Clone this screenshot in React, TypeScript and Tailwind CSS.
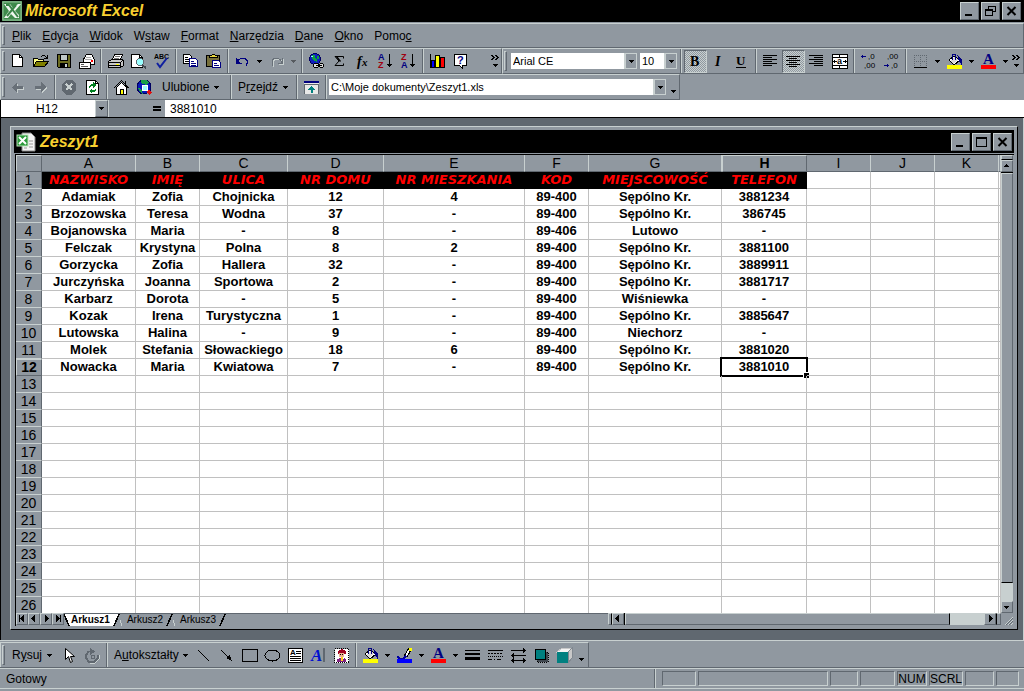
import { useState, type ReactNode } from 'react';
import clsx from 'clsx';

const MENU: [string, string, string][] = [
  ['', 'P', 'lik'],
  ['', 'E', 'dycja'],
  ['', 'W', 'idok'],
  ['W', 's', 'taw'],
  ['', 'F', 'ormat'],
  ['', 'N', 'arzędzia'],
  ['', 'D', 'ane'],
  ['', 'O', 'kno'],
  ['Pomo', 'c', '']
];

const COLUMNS = [
  { name: 'A', width: 'w-[94px]' },
  { name: 'B', width: 'w-[64px]' },
  { name: 'C', width: 'w-[88px]' },
  { name: 'D', width: 'w-[96px]' },
  { name: 'E', width: 'w-[141px]' },
  { name: 'F', width: 'w-[64px]' },
  { name: 'G', width: 'w-[133px]' },
  { name: 'H', width: 'w-[85px]' },
  { name: 'I', width: 'w-[64px]' },
  { name: 'J', width: 'w-[64px]' },
  { name: 'K', width: 'w-[64px]' },
  { name: '', width: 'w-auto' }
];

const DATA = [
  ['NAZWISKO', 'IMIĘ', 'ULICA', 'NR DOMU', 'NR MIESZKANIA', 'KOD', 'MIEJSCOWOŚĆ', 'TELEFON'],
  ['Adamiak', 'Zofia', 'Chojnicka', '12', '4', '89-400', 'Sępólno Kr.', '3881234'],
  ['Brzozowska', 'Teresa', 'Wodna', '37', '-', '89-400', 'Sępólno Kr.', '386745'],
  ['Bojanowska', 'Maria', '-', '8', '-', '89-406', 'Lutowo', '-'],
  ['Felczak', 'Krystyna', 'Polna', '8', '2', '89-400', 'Sępólno Kr.', '3881100'],
  ['Gorzycka', 'Zofia', 'Hallera', '32', '-', '89-400', 'Sępólno Kr.', '3889911'],
  ['Jurczyńska', 'Joanna', 'Sportowa', '2', '-', '89-400', 'Sępólno Kr.', '3881717'],
  ['Karbarz', 'Dorota', '-', '5', '-', '89-400', 'Wiśniewka', '-'],
  ['Kozak', 'Irena', 'Turystyczna', '1', '-', '89-400', 'Sępólno Kr.', '3885647'],
  ['Lutowska', 'Halina', '-', '9', '-', '89-400', 'Niechorz', '-'],
  ['Molek', 'Stefania', 'Słowackiego', '18', '6', '89-400', 'Sępólno Kr.', '3881020'],
  ['Nowacka', 'Maria', 'Kwiatowa', '7', '-', '89-400', 'Sępólno Kr.', '3881010']
];

const ROW_COUNT = 26;

const RAISED =
  'border border-t-[#c8d0d0] border-l-[#c8d0d0] border-r-[#606870] border-b-[#606870]';
const SUNKEN =
  'border border-t-[#606870] border-l-[#606870] border-r-[#c8d0d0] border-b-[#c8d0d0]';

function Icon({ children }: { children: ReactNode }) {
  return (
    <svg
      viewBox="0 0 17 17"
      className="block size-[17px] overflow-visible"
      fill="none"
      stroke="#000"
      shapeRendering="crispEdges"
      aria-hidden="true"
    >
      {children}
    </svg>
  );
}

function Glyph({
  x,
  y,
  size,
  color = '#000',
  serif = false,
  italic = false,
  bold = true,
  children
}: {
  x: number;
  y: number;
  size: number;
  color?: string;
  serif?: boolean;
  italic?: boolean;
  bold?: boolean;
  children: string;
}) {
  return (
    <text
      x={x}
      y={y}
      fontSize={size}
      fill={color}
      stroke="none"
      fontWeight={bold ? 700 : 400}
      fontStyle={italic ? 'italic' : 'normal'}
      fontFamily={serif ? 'Liberation Serif, serif' : 'Liberation Sans, sans-serif'}
    >
      {children}
    </text>
  );
}

function Down() {
  return (
    <svg viewBox="0 0 5 3" className="block h-[3px] w-[5px]" shapeRendering="crispEdges" aria-hidden="true">
      <path d="M0 0h5v1h-1v1h-1v1h-1v-1h-1v-1h-1z" fill="#000" />
    </svg>
  );
}

function Tool({
  label,
  pressed = false,
  children
}: {
  label: string;
  pressed?: boolean;
  children: ReactNode;
}) {
  return (
    <button
      type="button"
      aria-label={label}
      aria-pressed={pressed}
      className={clsx(
        'flex size-[23px] shrink-0 items-center justify-center',
        pressed &&
          'border border-t-[#606870] border-l-[#606870] border-r-[#c8d0d0] border-b-[#c8d0d0] bg-[repeating-conic-gradient(#c8d0d0_0_25%,#9098a0_0_50%)] bg-[length:2px_2px]'
      )}
    >
      {children}
    </button>
  );
}

function Drop({ label, dim = false }: { label: string; dim?: boolean }) {
  return (
    <button
      type="button"
      aria-label={label}
      className={clsx('flex h-[23px] w-[11px] shrink-0 items-center justify-center', dim && 'opacity-40')}
    >
      <Down />
    </button>
  );
}

function More({ label }: { label: string }) {
  return (
    <button type="button" aria-label={label} className="flex h-[23px] w-[11px] shrink-0 items-center justify-center">
      <svg viewBox="0 0 9 17" className="block h-[17px] w-[9px]" shapeRendering="crispEdges" fill="none" stroke="#000" aria-hidden="true">
        <path d="M0 2h2v1h1v1h1v1h-1v1h-1v1h-2v-1h1v-1h1v-1h-1v-1h-1zM4 2h2v1h1v1h1v1h-1v1h-1v1h-2v-1h1v-1h1v-1h-1v-1h-1z" fill="#000" stroke="none" />
        <path d="M2 11h5v1h-1v1h-1v1h-1v-1h-1v-1h-1z" fill="#000" stroke="none" />
      </svg>
    </button>
  );
}

function Sep() {
  return (
    <span className="flex w-[6px] shrink-0 justify-center self-stretch">
      <span className="w-[2px] border-r border-l border-r-[#c8d0d0] border-l-[#606870]" />
    </span>
  );
}

function Grip() {
  return <span className={clsx('mx-px my-[2px] w-[3px] shrink-0 self-stretch', RAISED)} />;
}

function Combo({
  label,
  value,
  className
}: {
  label: string;
  value: string;
  className: string;
}) {
  return (
    <div className={clsx('relative flex h-4 bg-white', className)}>
      <select
        aria-label={label}
        defaultValue={value}
        className="h-4 w-full appearance-none bg-white pl-[2px] text-[11px] leading-4 outline-none"
      >
        <option>{value}</option>
      </select>
      <span className="pointer-events-none absolute inset-y-0 right-0 flex w-[13px] items-center justify-center border border-l-2 border-[#c8d0d0] bg-[#9098a0]">
        <Down />
      </span>
    </div>
  );
}

function WinButton({ label, children }: { label: string; children: ReactNode }) {
  return (
    <button
      type="button"
      aria-label={label}
      className={clsx('flex h-[18px] w-[19px] items-center justify-center bg-[#9098a0]', RAISED)}
    >
      <svg viewBox="0 0 13 12" className="block h-3 w-[13px]" fill="none" stroke="#000" shapeRendering="crispEdges" aria-hidden="true">
        {children}
      </svg>
    </button>
  );
}

function WinButtons({ middle }: { middle: 'restore' | 'maximize' }) {
  return (
    <div className="flex gap-[2px]">
      <WinButton label="Minimalizuj">
        <path d="M2 10h7" strokeWidth="2" />
      </WinButton>
      <WinButton label={middle === 'restore' ? 'Przywróć' : 'Maksymalizuj'}>
        {middle === 'restore' ? (
          <>
            <path d="M4.500 4v-3h7v5h-3M4 1.500h8M1.500 4.500h7v6h-7zM1 5.500h8" />
          </>
        ) : (
          <path d="M1.500 1.500h10v9h-10zM1 2.500h11" />
        )}
      </WinButton>
      <WinButton label="Zamknij">
        <path d="M2.500 2l8 8M10.500 2l-8 8" strokeWidth="2" shapeRendering="auto" />
      </WinButton>
    </div>
  );
}

function Bucket() {
  return (
    <Icon>
      <path d="M3 7l5-4 6 4-6 5z" fill="#fff" />
      <path d="M4 8l5-4 3 2-4 5z" fill="#d8d8d8" stroke="none" />
      <path d="M6.500 7v-5l1-1h1l1 1v5" stroke="#000080" />
      <path d="M12 3l3 3v4l-2-3z" fill="#000080" stroke="#000080" />
      <path d="M1 12h15v4h-15z" fill="#ff0" stroke="none" />
    </Icon>
  );
}

function FontColor() {
  return (
    <Icon>
      <Glyph x={3} y={11} size={15} color="#000080" serif>
        A
      </Glyph>
      <path d="M1 12h15v4h-15z" fill="#f00" stroke="none" />
    </Icon>
  );
}

function TitleBar() {
  return (
    <header className="flex h-[22px] shrink-0 items-center bg-black pr-[3px] pl-[2px] text-[#f8d030]">
      <svg viewBox="0 0 20 20" className="mr-[3px] size-5" aria-hidden="true">
        <rect width="20" height="20" fill="#5a9c66" />
        <path d="M1 1h18v18h-18z" fill="#3f8a4c" stroke="#8fbf96" />
        <path d="M2 3h6l3 4 5-4h3l-6 7 4 4v3h-4l-4-4-3 4h-4l5-7z" fill="#f0f6f0" />
        <path d="M4 4h3l9 12M14 4l-9 11" fill="none" stroke="#3a8448" strokeWidth="2" />
      </svg>
      <h1 className="flex-1 text-base leading-5 font-bold italic">Microsoft Excel</h1>
      <WinButtons middle="restore" />
    </header>
  );
}

function MenuBar() {
  return (
    <nav className={clsx('mt-px flex h-[25px] shrink-0 items-center gap-px', RAISED)}>
      <Grip />
      {MENU.map(([before, key, after]) => (
        <button key={before + key + after} type="button" className="px-[5px] leading-5">
          {before}
          <u>{key}</u>
          {after}
        </button>
      ))}
    </nav>
  );
}

function StandardToolbar() {
  return (
    <div className={clsx('flex w-[502px] items-center', RAISED)}>
      <Grip />
      <Tool label="Nowy">
        <Icon>
          <path d="M3.500 1.500h7l3 3v9h-10z" fill="#fff" />
          <path d="M10.500 1.500v3h3" />
        </Icon>
      </Tool>
      <Tool label="Otwórz">
        <Icon>
          <path d="M1.500 13.500v-8h4l1 1h5v7z" fill="#ff8" />
          <path d="M1.500 13.500l3-5h12l-4 5z" fill="#808000" />
          <path d="M9 3.500h1M10 2.500h3M13 3.500h1M14 4.500h1M12 5.500h4M15.500 2v3" />
        </Icon>
      </Tool>
      <Tool label="Zapisz">
        <Icon>
          <path d="M2.500 1.500h13v13h-12l-1-1z" fill="#6b6b20" />
          <path d="M5.500 1.500h7v6h-7z" fill="#c0c8c8" />
          <path d="M5 10h8v4h-8z" fill="#000" stroke="none" />
          <path d="M10 11h2v3h-2z" fill="#c8d0d0" stroke="none" />
        </Icon>
      </Tool>
      <Tool label="Poczta">
        <Icon>
          <path d="M5.500 6.500l3-5h5l3 5v5h-11z" fill="#fff" />
          <path d="M8 4.500h5M7 6.500h7" stroke="#aaa" />
          <path d="M13 7h2v2h-2z" fill="#f00" stroke="none" />
          <path d="M1.500 9.500h11v6h-11z" fill="#fff" />
          <path d="M3 11.500h3M3 13.500h7" stroke="#555" />
        </Icon>
      </Tool>
      <Sep />
      <Tool label="Drukuj">
        <Icon>
          <path d="M5.500 6.500l2-5h8l-2 5z" fill="#fff" />
          <path d="M8 3.500h5M7 5.500h5" stroke="#777" />
          <path d="M1.500 8.500l3-2h11l1 2v4l-3 2h-12z" fill="#c8c8c8" />
          <path d="M1 9.500h12v5M13 9.500l3-2M2 12.500h11" />
          <path d="M9 11h3v1h-3z" fill="#ff0" stroke="none" />
        </Icon>
      </Tool>
      <Tool label="Podgląd wydruku">
        <Icon>
          <path d="M1.500 1.500h8l3 3v10h-11z" fill="#fff" />
          <path d="M9.500 1.500v3h3" />
          <circle cx="10" cy="9" r="3.500" fill="#9ff" stroke="#606870" />
          <path d="M12 12l4 3" strokeWidth="2" stroke="#404850" />
        </Icon>
      </Tool>
      <Tool label="Pisownia">
        <Icon>
          <Glyph x={1} y={6} size={7}>
            ABC
          </Glyph>
          <path d="M4 10l3 4 7-9" stroke="#1020a0" strokeWidth="2" shapeRendering="auto" />
        </Icon>
      </Tool>
      <Sep />
      <Tool label="Kopiuj">
        <Icon>
          <path d="M1.500 1.500h6l2 2v7h-8z" fill="#fff" />
          <path d="M3 4.500h3M3 6.500h5M3 8.500h5" />
          <path d="M7.500 5.500h6l2 2v6h-8z" fill="#fff" stroke="#000080" />
          <path d="M9 8.500h3M9 10.500h5M9 12.500h5" stroke="#000080" />
        </Icon>
      </Tool>
      <Tool label="Wklej">
        <Icon>
          <path d="M1.500 2.500h13v11h-13z" fill="#77703c" />
          <path d="M4.500 4.500v-2h2l1-1h2l1 1h2v2z" fill="#e8d840" />
          <path d="M7.500 7.500h6l2 2v5h-8z" fill="#fff" stroke="#000080" />
          <path d="M9 10.500h3M9 12.500h5" stroke="#000080" />
        </Icon>
      </Tool>
      <Sep />
      <Tool label="Cofnij">
        <Icon>
          <path d="M2.500 5v5h5M3 9.500l2-3 2-1h4l2 2v3l-1 2" stroke="#000080" />
          <path d="M2 6h1l2 2 1 2h-4z" fill="#000080" stroke="none" />
        </Icon>
      </Tool>
      <Drop label="Lista cofania" />
      <Tool label="Ponów">
        <Icon>
          <path d="M15.500 6v5h-5M15 10.500l-2-3-2-1h-4l-2 2v3l1 2" stroke="#c8d0d0" />
          <path d="M14.500 5v5h-5M14 9.500l-2-3-2-1h-4l-2 2v3l1 2" stroke="#687078" />
        </Icon>
      </Tool>
      <Drop label="Lista ponawiania" dim />
      <Sep />
      <Tool label="Wstaw hiperłącze">
        <Icon>
          <circle cx="7" cy="6" r="5.500" fill="#1020c0" stroke="#000060" />
          <path d="M4 2h3v3l2 1v3l-3-1-2-3zM9 3h2v3h-2z" fill="#10a040" stroke="none" />
          <path d="M3 3h2v1h-2z" fill="#8ff" stroke="none" />
          <path d="M5.500 11.500l1-1h3l1 1v2l-1 1h-3l-1-1zM11.500 11.500l1-1h2l1 1v2l-1 1h-2l-1-1z" fill="#ddd" />
          <path d="M8 12.500h6" />
        </Icon>
      </Tool>
      <Tool label="Autosumowanie">
        <Icon>
          <path d="M12.500 5.500v-2h-8.500l4 4.500-4 4.500h8.500v-2" shapeRendering="auto" />
          <path d="M4 3h2l4 5-1 1z" fill="#000" stroke="none" shapeRendering="auto" />
        </Icon>
      </Tool>
      <Tool label="Wklej funkcję">
        <Icon>
          <Glyph x={3} y={13} size={14} serif italic>
            f
          </Glyph>
          <Glyph x={8} y={13} size={11} serif italic>
            x
          </Glyph>
        </Icon>
      </Tool>
      <Tool label="Sortuj rosnąco">
        <Icon>
          <Glyph x={1} y={7} size={9} color="#000080">
            A
          </Glyph>
          <Glyph x={1} y={15} size={9} color="#a00010">
            Z
          </Glyph>
          <path d="M12.500 1v13M10 11.500h5M11 12.500h3" />
        </Icon>
      </Tool>
      <Tool label="Sortuj malejąco">
        <Icon>
          <Glyph x={1} y={7} size={9} color="#a00010">
            Z
          </Glyph>
          <Glyph x={1} y={15} size={9} color="#000080">
            A
          </Glyph>
          <path d="M12.500 1v13M10 11.500h5M11 12.500h3" />
        </Icon>
      </Tool>
      <Sep />
      <Tool label="Kreator wykresów">
        <Icon>
          <path d="M1.500 1v13.500h14" />
          <path d="M2.500 7.500h3v7h-3z" fill="#00f" />
          <path d="M6.500 2.500h4v12h-4z" fill="#ff0" />
          <path d="M11.500 4.500h4v10h-4z" fill="#f00" />
        </Icon>
      </Tool>
      <Tool label="Pomoc">
        <Icon>
          <path d="M2.500 1.500h12v11h-4v3l-3-3h-5z" fill="#fff" />
          <Glyph x={5} y={11} size={11} color="#000080">
            ?
          </Glyph>
        </Icon>
      </Tool>
      <span className="flex-1" />
      <More label="Więcej przycisków" />
    </div>
  );
}

function FormatToolbar() {
  return (
    <div className={clsx('flex flex-1 items-center', RAISED)}>
      <Grip />
      <Combo label="Czcionka" value="Arial CE" className="ml-[3px] w-[126px]" />
      <Combo label="Rozmiar czcionki" value="10" className="ml-[3px] w-[37px]" />
      <span className="w-px" />
      <Sep />
      <Tool label="Pogrubienie" pressed>
        <Icon>
          <Glyph x={3} y={13} size={14} serif>
            B
          </Glyph>
        </Icon>
      </Tool>
      <Tool label="Kursywa">
        <Icon>
          <Glyph x={5} y={13} size={14} serif italic>
            I
          </Glyph>
        </Icon>
      </Tool>
      <Tool label="Podkreślenie">
        <Icon>
          <Glyph x={3} y={12} size={13} serif>
            U
          </Glyph>
          <path d="M3 14.500h10" />
        </Icon>
      </Tool>
      <Sep />
      <Tool label="Wyrównaj do lewej">
        <Icon>
          <path d="M1 2.500h14M1 4.500h9M1 6.500h14M1 8.500h9M1 10.500h14M1 12.500h9" />
        </Icon>
      </Tool>
      <Tool label="Wyśrodkuj" pressed>
        <Icon>
          <path d="M1 3.500h14M4 5.500h8M1 7.500h14M4 9.500h8M1 11.500h14M4 13.500h8" />
        </Icon>
      </Tool>
      <Tool label="Wyrównaj do prawej">
        <Icon>
          <path d="M1 2.500h14M6 4.500h9M1 6.500h14M6 8.500h9M1 10.500h14M6 12.500h9" />
        </Icon>
      </Tool>
      <Tool label="Scal i wyśrodkuj">
        <Icon>
          <path d="M1.500 1.500h15v14h-15z" fill="#fff" />
          <path d="M1 4.500h16M1 12.500h16M8.500 1v3M8.500 13v3M2 8.500h4M12 8.500h4M3.500 7v3M14.500 7v3" />
          <Glyph x={6} y={11} size={9}>
            a
          </Glyph>
        </Icon>
      </Tool>
      <Sep />
      <Tool label="Zwiększ dziesiętne">
        <Icon>
          <path d="M1 3.500h5M2.500 2v3" stroke="#000080" />
          <Glyph x={8} y={6} size={8} bold={false}>
            ,0
          </Glyph>
          <Glyph x={4} y={15} size={8} bold={false}>
            ,00
          </Glyph>
        </Icon>
      </Tool>
      <Tool label="Zmniejsz dziesiętne">
        <Icon>
          <Glyph x={4} y={6} size={8} bold={false}>
            ,00
          </Glyph>
          <path d="M1 12.500h5M4.500 11v3" stroke="#000080" />
          <Glyph x={8} y={15} size={8} bold={false}>
            ,0
          </Glyph>
        </Icon>
      </Tool>
      <Sep />
      <Tool label="Obramowanie">
        <Icon>
          <path d="M2.500 2v12M8.500 2v12M14.500 2v12M2 2.500h13M2 8.500h13" stroke="#606870" strokeDasharray="1 1" />
          <path d="M2 14.500h13" />
        </Icon>
      </Tool>
      <Drop label="Rodzaj obramowania" />
      <Tool label="Kolor wypełnienia">
        <Bucket />
      </Tool>
      <Drop label="Lista kolorów wypełnienia" />
      <Tool label="Kolor czcionki">
        <FontColor />
      </Tool>
      <Drop label="Lista kolorów czcionki" />
      <More label="Więcej przycisków formatowania" />
    </div>
  );
}

function WebToolbar() {
  return (
    <div className={clsx('flex h-[26px] w-[680px] shrink-0 items-center', RAISED)}>
      <Grip />
      <Tool label="Wstecz">
        <Icon>
          <path d="M4 9l5-5v4h6v3h-6v4z" fill="#c8d0d0" stroke="none" />
          <path d="M3 8l5-5v4h6v3h-6v4z" fill="#687078" stroke="none" />
        </Icon>
      </Tool>
      <Tool label="Dalej">
        <Icon>
          <path d="M15 9l-5-5v4h-6v3h6v4z" fill="#c8d0d0" stroke="none" />
          <path d="M14 8l-5-5v4h-6v3h6v4z" fill="#687078" stroke="none" />
        </Icon>
      </Tool>
      <Sep />
      <Tool label="Zatrzymaj">
        <Icon>
          <path d="M5 1h6l4 4v6l-4 5h-6l-4-5v-6z" fill="#606870" stroke="none" />
          <path d="M5 5l6 6M11 5l-6 6" stroke="#c8d0d0" strokeWidth="2" />
        </Icon>
      </Tool>
      <Tool label="Odśwież">
        <Icon>
          <path d="M2.500 1.500h9l3 3v11h-12z" fill="#fff" />
          <path d="M11.500 1.500v3h3" />
          <path d="M5 9v-2l2-2h2v-2l3 3-3 3v-2h-2zM12 9v2l-2 2h-2v2l-3-3 3-3v2h2z" fill="#008020" stroke="none" />
        </Icon>
      </Tool>
      <Sep />
      <Tool label="Strona startowa">
        <Icon>
          <path d="M3.500 15.500v-7l5-5 5 5v7z" fill="#fff" />
          <path d="M1 9l7.500-7.500 7 7.500M12.500 2v4" strokeWidth="1" />
          <path d="M7.500 10.500h3v5h-3z" fill="#ff0" />
        </Icon>
      </Tool>
      <Tool label="Przeszukaj sieć">
        <Icon>
          <circle cx="8" cy="8" r="7" fill="#0818b8" stroke="#000060" />
          <path d="M5 1h6l2 3-3 2-5-2zM2 9l3 1 2 5-3-2z" fill="#18a048" stroke="none" />
          <circle cx="9" cy="9" r="3" fill="#a0ffff" stroke="#fff" />
          <path d="M12 12l3 3" stroke="#e01010" strokeWidth="3" />
        </Icon>
      </Tool>
      <button type="button" className="flex w-[72px] shrink-0 items-center gap-[5px] pl-[6px] leading-5">
        Ulubione
        <Down />
      </button>
      <Sep />
      <button type="button" className="flex w-[60px] shrink-0 items-center gap-[5px] pl-[4px] leading-5">
        <span>
          P<u>r</u>zejdź
        </span>
        <Down />
      </button>
      <Sep />
      <Tool label="Pokaż tylko pasek narzędzi Sieć Web">
        <Icon>
          <path d="M1 2h15v13h-15z" fill="#e8e8e8" stroke="none" />
          <path d="M1 3h15" stroke="#000080" strokeWidth="2" />
          <path d="M1 5.500h15M1.500 5v10M15.500 5v10" stroke="#606870" />
          <path d="M8.500 7l4 4h-3v3h-2v-3h-3z" fill="#008080" stroke="none" />
        </Icon>
      </Tool>
      <Sep />
      <Combo label="Adres" value="C:\Moje dokumenty\Zeszyt1.xls" className="mr-[2px] min-w-0 flex-1" />
      <span className="mt-2">
        <Drop label="Opcje paska" />
      </span>
    </div>
  );
}

function FormulaBar() {
  return (
    <div className="flex h-[18px] shrink-0 items-stretch border-b border-b-black bg-[#9098a0]">
      <div className="relative flex w-[108px] border-l border-l-black bg-white">
        <select
          aria-label="Pole nazwy"
          defaultValue="H12"
          className="w-full appearance-none bg-white pl-[35px] leading-4 outline-none"
        >
          <option>H12</option>
        </select>
        <span
          className={clsx(
            'pointer-events-none absolute inset-y-0 right-0 flex w-[13px] items-center justify-center bg-[#9098a0]',
            RAISED
          )}
        >
          <Down />
        </span>
      </div>
      <button type="button" aria-label="Edytuj formułę" className="flex w-[57px] items-center justify-end border-l border-l-[#c8d0d0] pr-1">
        <svg viewBox="0 0 8 5" className="h-[5px] w-2" shapeRendering="crispEdges" aria-hidden="true">
          <path d="M0 0h8v2h-8zM0 3h8v2h-8z" />
        </svg>
      </button>
      <input
        aria-label="Pasek formuły"
        defaultValue="3881010"
        className="min-w-0 flex-1 bg-white pl-[5px] leading-4 outline-none"
      />
    </div>
  );
}

function Sheet() {
  return (
    <div className="min-w-0 flex-1 overflow-hidden bg-white">
      <table className="w-full table-fixed border-separate border-spacing-0 text-[13px] leading-4">
        <colgroup>
          <col className="w-[26px]" />
          {COLUMNS.map((column) => (
            <col key={column.name} className={column.width} />
          ))}
        </colgroup>
        <thead>
          <tr className="h-[17px]">
            <td className={clsx('h-[17px] bg-[#9098a0] p-0', RAISED)} />
            {COLUMNS.map((column) => (
              <th
                key={column.name}
                scope="col"
                className={clsx(
                  'h-[17px] bg-[#9098a0] p-0 text-sm leading-[15px]',
                  column.name === 'H'
                    ? 'border border-t-[#c8d0d0] border-l-[#c8d0d0] border-r-[#606870] border-b-[#606870] font-bold'
                    : 'border-r border-b border-r-[#c8d0d0] border-b-[#606870] font-normal'
                )}
              >
                {column.name}
              </th>
            ))}
          </tr>
        </thead>
        <tbody>
          {Array.from({ length: ROW_COUNT }, (_, row) => (
            <tr key={row} className="h-[17px]">
              <th
                scope="row"
                className={clsx(
                  'h-[17px] bg-[#9098a0] p-0 text-sm leading-[15px]',
                  row === 11
                    ? 'border border-t-[#c8d0d0] border-l-[#c8d0d0] border-r-[#606870] border-b-[#606870] font-bold'
                    : 'border-r border-b border-r-[#606870] border-b-[#c8d0d0] font-normal'
                )}
              >
                {row + 1}
              </th>
              {COLUMNS.map((column, index) => {
                const heading = row === 0 && index < 8;
                return (
                  <td
                    key={column.name}
                    className={clsx(
                      'relative h-[17px] p-0 text-center font-bold whitespace-nowrap',
                      heading
                        ? "border-r border-b border-black bg-black font-['DejaVu_Sans',sans-serif] text-[#ff0000] italic"
                        : 'border-r border-b border-[#c0c0c0]'
                    )}
                  >
                    {DATA[row]?.[index]}
                    {row === 11 && index === 7 && (
                      <span className="absolute -inset-[2px] border-2 border-black">
                        <span className="absolute -right-[3px] -bottom-[3px] size-[5px] bg-black outline outline-white" />
                      </span>
                    )}
                  </td>
                );
              })}
            </tr>
          ))}
        </tbody>
      </table>
    </div>
  );
}

function ScrollArrow({ label, d }: { label: string; d: string }) {
  return (
    <button
      type="button"
      aria-label={label}
      className="flex size-3 shrink-0 items-center justify-center border border-t-[#c8d0d0] border-l-[#c8d0d0] border-r-[#606870] border-b-[#606870] bg-[#9098a0]"
    >
      <svg viewBox="0 0 8 8" className="block size-2 shrink-0" shapeRendering="crispEdges" aria-hidden="true">
        <path d={d} fill="#000" />
      </svg>
    </button>
  );
}

const ARROW_UP = 'M3 2h1v1h1v1h1v1h-5v-1h1v-1h1z';
const ARROW_DOWN = 'M1 3h5v1h-1v1h-1v1h-1v-1h-1v-1h-1z';
const ARROW_LEFT = 'M5 0v7h-1v-1h-1v-1h-1v-1h-1v-1h1v-1h1v-1h1v-1z';
const ARROW_RIGHT = 'M3 0v7h1v-1h1v-1h1v-1h1v-1h-1v-1h-1v-1h-1v-1z';

function VerticalScroll() {
  return (
    <div className="flex w-3 shrink-0 flex-col bg-[#c8d0d0]">
      <span className={clsx('h-[5px] border-b-black! bg-[#9098a0]', RAISED)} />
      <ScrollArrow label="Przewiń w górę" d={ARROW_UP} />
      <span className="h-px bg-black" />
      <span className={clsx('grow-[410] border-b-black! bg-[#9098a0]', RAISED)} />
      <span className="grow-[18]" />
      <ScrollArrow label="Przewiń w dół" d={ARROW_DOWN} />
    </div>
  );
}

function SheetTab({
  name,
  active,
  first,
  onSelect
}: {
  name: string;
  active: boolean;
  first: boolean;
  onSelect: () => void;
}) {
  const fill = active ? '#fff' : '#9098a0';
  return (
    <button
      type="button"
      role="tab"
      aria-selected={active}
      onClick={onSelect}
      className={clsx('flex items-center text-[10px] leading-3', active && 'font-bold')}
    >
      <svg viewBox="0 0 7 12" className="h-3 w-[7px]" shapeRendering="crispEdges" aria-hidden="true">
        <path d="M0 0h7v12h-2z" fill={fill} />
        {first ? (
          <path d="M0 0l5 12" stroke="#000" fill="none" strokeWidth="1.500" />
        ) : (
          <path d="M0 6l2 6" stroke="#c8d0d0" fill="none" />
        )}
      </svg>
      <span className={clsx('h-3', active && 'bg-white')}>{name}</span>
      <svg viewBox="0 0 10 12" className="h-3 w-[10px]" shapeRendering="crispEdges" aria-hidden="true">
        <path d="M0 0h9l-5 12h-4z" fill={fill} />
        <path d="M9 0l-5 12" stroke="#000" fill="none" strokeWidth="1.500" />
      </svg>
    </button>
  );
}

function SheetFooter() {
  const [tab, setTab] = useState('Arkusz1');

  return (
    <div className="flex h-[13px] shrink-0 items-start">
      <div className="flex min-w-0 flex-1">
        <ScrollArrow label="Pierwszy arkusz" d="M1 0h1v7h-1zM6 0v7h-1v-1h-1v-1h-1v-1h-1v-1h1v-1h1v-1h1v-1z" />
        <ScrollArrow label="Poprzedni arkusz" d={ARROW_LEFT} />
        <ScrollArrow label="Następny arkusz" d={ARROW_RIGHT} />
        <ScrollArrow label="Ostatni arkusz" d="M6 0h1v7h-1zM2 0v7h1v-1h1v-1h1v-1h1v-1h-1v-1h-1v-1h-1v-1z" />
        <div role="tablist" className="flex flex-1 border-t border-t-[#606870]">
          {['Arkusz1', 'Arkusz2', 'Arkusz3'].map((name, index) => (
            <SheetTab
              key={name}
              name={name}
              active={tab === name}
              first={index === 0}
              onSelect={() => setTab(name)}
            />
          ))}
        </div>
      </div>
      <div className="flex h-3 w-[393px] shrink-0 bg-[#c8d0d0]">
        <span className={clsx('w-1 border-r-black! bg-[#9098a0]', RAISED)} />
        <ScrollArrow label="Przewiń w lewo" d={ARROW_LEFT} />
        <span className="w-px bg-black" />
        <span className={clsx('grow-[325] border-r-black! bg-[#9098a0]', RAISED)} />
        <span className="grow-[34]" />
        <ScrollArrow label="Przewiń w prawo" d={ARROW_RIGHT} />
        <span className={clsx('w-[5px] border-l-black! bg-[#9098a0]', RAISED)} />
      </div>
      <svg viewBox="0 0 12 12" className="size-3 shrink-0" aria-hidden="true">
        <path d="M4 12l8-8M7 12l5-5M10 12l2-2" stroke="#c8d0d0" />
        <path d="M5 12l7-7M8 12l4-4" stroke="#606870" />
      </svg>
    </div>
  );
}

function Workbook() {
  return (
    <section className="flex min-h-0 flex-1 flex-col border border-t-[#c8d0d0] border-l-[#c8d0d0] border-r-black border-b-black bg-[#9098a0] p-[3px]">
      <div className="flex h-[23px] shrink-0 items-center bg-black pr-[2px] text-[#f8d030]">
        <svg viewBox="0 0 20 20" className="mr-1 ml-[2px] size-5" aria-hidden="true">
          <path d="M6 1h9l4 4v14h-13z" fill="#f4f4f4" stroke="#888" />
          <path d="M13 9h4M13 12h4M13 15h4M8 16h3" stroke="#999" />
          <rect x="1" y="3" width="11" height="11" fill="#2a9a3a" stroke="#b8e0b8" />
          <path d="M3 5l7 7M10 5l-7 7" stroke="#fff" strokeWidth="2" />
        </svg>
        <h2 className="flex-1 text-base leading-5 font-bold italic">Zeszyt1</h2>
        <WinButtons middle="maximize" />
      </div>
      <div className="mt-px ml-px flex min-h-0 flex-1 flex-col border-t border-l border-black pr-px">
        <div className="flex min-h-0 flex-1">
          <Sheet />
          <VerticalScroll />
        </div>
        <SheetFooter />
      </div>
    </section>
  );
}

function DrawingToolbar() {
  return (
    <div className="shrink-0 border-y border-t-[#c8d0d0] border-b-[#606870]">
      <div className={clsx('mt-px flex h-[25px] w-[589px] items-center border-b-0!', RAISED)}>
        <Grip />
        <button type="button" className="flex w-[52px] shrink-0 items-center gap-[5px] pl-[6px] leading-5">
          <span>
            R<u>y</u>suj
          </span>
          <Down />
        </button>
        <Tool label="Zaznacz obiekty">
          <Icon>
            <path d="M4.500 1.500v11l3-3 2 6 2-1-2-5h4z" fill="#fff" stroke="#000" shapeRendering="auto" />
          </Icon>
        </Tool>
        <Tool label="Obrót swobodny">
          <Icon>
            <path d="M15 8v4l-4 4h-5l-3-3" stroke="#c8d0d0" />
            <path d="M5 4l-3 4v3l3 4h5l4-4v-3" stroke="#606870" strokeWidth="2" />
            <path d="M6 1v7l5-3.500z" stroke="none" fill="#606870" />
            <path d="M7 8h3v3h-3z" stroke="#606870" />
          </Icon>
        </Tool>
        <Sep />
        <button type="button" className="flex w-[82px] shrink-0 items-center gap-1 pl-[4px] leading-5">
          <span>
            A<u>u</u>tokształty
          </span>
          <Down />
        </button>
        <Tool label="Linia">
          <Icon>
            <path d="M3 3l11 11" />
          </Icon>
        </Tool>
        <Tool label="Strzałka">
          <Icon>
            <path d="M3 3l9 9" />
            <path d="M14 14l-6-3 4-3z" fill="#000" stroke="none" />
          </Icon>
        </Tool>
        <Tool label="Prostokąt">
          <Icon>
            <path d="M1.500 2.500h15v12h-15z" />
          </Icon>
        </Tool>
        <Tool label="Elipsa">
          <Icon>
            <ellipse cx="8.500" cy="8.500" rx="7.500" ry="5.500" />
          </Icon>
        </Tool>
        <Tool label="Pole tekstowe">
          <Icon>
            <path d="M1.500 1.500h14v14h-14z" fill="#fff" />
            <Glyph x={3} y={8} size={8}>
              A
            </Glyph>
            <path d="M9 4.500h5M9 6.500h5M3 9.500h11M3 11.500h11M3 13.500h11" />
          </Icon>
        </Tool>
        <Tool label="Wstaw WordArt">
          <Icon>
            <path d="M13 1h2v14h-2z" fill="#606870" stroke="none" />
            <Glyph x={1} y={14} size={17} color="#0010d0" serif italic>
              A
            </Glyph>
          </Icon>
        </Tool>
        <Tool label="Wstaw clipart">
          <Icon>
            <path d="M1.500 1.500h14v14h-14z" fill="#fff" strokeDasharray="1 1" />
            <path d="M5 4l4-2 4 2v3h-8z" fill="#a00020" stroke="none" />
            <path d="M6 6h5v4h-5z" fill="#f0b090" stroke="none" />
            <path d="M7 7.500h1M9 7.500h1" />
            <path d="M4 15v-3l3-1 2 1 3-1 1 2v2z" fill="#802080" stroke="none" />
            <path d="M8 10h2v4h-2z" fill="#ffd020" stroke="none" />
          </Icon>
        </Tool>
        <Sep />
        <Tool label="Kolor wypełnienia kształtu">
          <Bucket />
        </Tool>
        <Drop label="Lista wypełnień" />
        <Tool label="Kolor linii">
          <Icon>
            <path d="M8 9l5-8h3l-5 9z" fill="#fff" />
            <path d="M13 1h3v3h-3z" fill="#ff0" stroke="none" />
            <path d="M1 11v-2h2l1 2h2l3-3 2 2-3 2h-6z" fill="#0000a0" stroke="none" />
            <path d="M1 12h15v4h-15z" fill="#00f" stroke="none" />
          </Icon>
        </Tool>
        <Drop label="Lista kolorów linii" />
        <Tool label="Kolor czcionki kształtu">
          <FontColor />
        </Tool>
        <Drop label="Lista kolorów tekstu" />
        <Tool label="Styl linii">
          <Icon>
            <path d="M1 3.500h15" />
            <path d="M1 7h15" strokeWidth="2" />
            <path d="M1 11.500h15" strokeWidth="3" />
          </Icon>
        </Tool>
        <Tool label="Styl kreski">
          <Icon>
            <path d="M1 3.500h15" />
            <path d="M1 6.500h15" strokeDasharray="2 1" />
            <path d="M1 9.500h15" strokeDasharray="1 1" />
            <path d="M1 12.500h15" strokeDasharray="4 2 1 2" />
          </Icon>
        </Tool>
        <Tool label="Styl strzałki">
          <Icon>
            <path d="M1 3.500h15M1 8.500h15M1 13.500h15M13.500 1v5M14.500 2v3M2.500 7v3M3.500 6v5M2.500 12v3M3.500 11v5M14.500 12v3M13.500 11v5" />
          </Icon>
        </Tool>
        <Tool label="Cień">
          <Icon>
            <path d="M4 5h11v10h-11z" fill="#404850" stroke="#000" strokeDasharray="1 1" />
            <path d="M2.500 2.500h10v10h-10z" fill="#008080" />
          </Icon>
        </Tool>
        <Tool label="Efekt trójwymiarowy">
          <Icon>
            <path d="M1 5l5-4h10l-4 4z" fill="#f4f4f4" stroke="#c8c8c8" />
            <path d="M12 5l4-4v10l-4 5z" fill="#c8c8c8" stroke="#808890" />
            <path d="M1 5h11v11h-11z" fill="#008080" stroke="none" />
          </Icon>
        </Tool>
        <span className="mt-2">
          <Drop label="Opcje paska rysowania" />
        </span>
      </div>
    </div>
  );
}

function StatusBar() {
  const panels = [
    { width: 'w-[34px]', text: '' },
    { width: 'w-[130px]', text: '' },
    { width: 'w-[28px]', text: '' },
    { width: 'w-[35px]', text: '' },
    { width: 'w-[30px]', text: 'NUM' },
    { width: 'w-[34px]', text: 'SCRL' },
    { width: 'w-[29px]', text: '' },
    { width: 'w-[23px]', text: '' }
  ];

  return (
    <footer className="flex h-[23px] shrink-0 flex-col border-t border-t-[#c8d0d0]">
      <div className="flex h-5 items-center gap-[2px] border-b border-b-[#c8d0d0] pr-[5px] pl-[6px]">
        <span className="flex-1 leading-5">Gotowy</span>
        <span className="mr-1 w-[2px] self-stretch border-r border-l border-r-[#c8d0d0] border-l-[#606870]" />
        {panels.map((panel, index) => (
          <span
            key={index}
            className={clsx('flex h-[15px] items-center justify-center leading-none', panel.width, SUNKEN)}
          >
            {panel.text}
          </span>
        ))}
      </div>
    </footer>
  );
}

export default function App() {
  return (
    <div className="flex h-screen flex-col bg-[#9098a0] font-['Liberation_Sans',Arial,sans-serif] text-xs text-black">
      <TitleBar />
      <MenuBar />
      <div className="flex h-[26px] shrink-0">
        <StandardToolbar />
        <FormatToolbar />
      </div>
      <WebToolbar />
      <FormulaBar />
      <main className="flex min-h-0 flex-1 flex-col border-r border-l border-r-[#c8d0d0] border-l-black bg-[#606870] pt-2 pr-[5px] pb-[10px] pl-[9px]">
        <Workbook />
      </main>
      <DrawingToolbar />
      <StatusBar />
    </div>
  );
}
